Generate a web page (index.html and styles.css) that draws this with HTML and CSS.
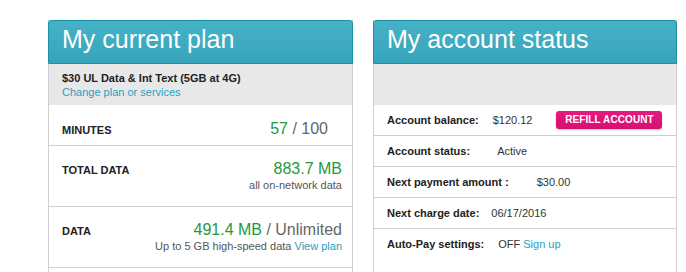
FILE: index.html
```html
<!DOCTYPE html>
<html>
<head>
<meta charset="utf-8">
<link rel="stylesheet" href="styles.css">
</head>
<body>
<div class="wrap">
  <section class="panel">
    <h2 class="panel-head">My current plan</h2>
    <div class="band">
      <div class="plan-name">$30 UL Data &amp; Int Text (5GB at 4G)</div>
      <a class="link" href="#">Change plan or services</a>
    </div>
    <div class="usage-row row-minutes">
      <div class="usage-label">MINUTES</div>
      <div class="usage-value minutes-val"><span class="green">57</span> / 100</div>
    </div>
    <div class="usage-row row-tall">
      <div class="usage-label">TOTAL DATA</div>
      <div class="usage-right">
        <div class="usage-value"><span class="green">883.7 MB</span></div>
        <div class="usage-note">all on-network data</div>
      </div>
    </div>
    <div class="usage-row row-tall">
      <div class="usage-label">DATA</div>
      <div class="usage-right">
        <div class="usage-value"><span class="green">491.4 MB</span> / Unlimited</div>
        <div class="usage-note">Up to 5 GB high-speed data <a class="link" href="#">View plan</a></div>
      </div>
    </div>
  </section>
  <section class="panel">
    <h2 class="panel-head">My account status</h2>
    <div class="band"></div>
    <div class="acct-row">
      <span class="acct-label">Account balance:</span>
      <span class="acct-val gap-balance">$120.12</span>
      <a class="btn" href="#">REFILL ACCOUNT</a>
    </div>
    <div class="acct-row">
      <span class="acct-label">Account status:</span>
      <span class="acct-val gap-status">Active</span>
    </div>
    <div class="acct-row">
      <span class="acct-label">Next payment amount :</span>
      <span class="acct-val gap-payment">$30.00</span>
    </div>
    <div class="acct-row">
      <span class="acct-label">Next charge date:</span>
      <span class="acct-val gap-charge">06/17/2016</span>
    </div>
    <div class="acct-row last">
      <span class="acct-label">Auto-Pay settings:</span>
      <span class="acct-val gap-autopay">OFF <a class="link" href="#">Sign up</a></span>
    </div>
  </section>
</div>
</body>
</html>
```
FILE: styles.css
```css
html, body {
  margin: 0;
  padding: 0;
  background: #fff;
  overflow: hidden;
}
body {
  font-family: "Liberation Sans", Arial, sans-serif;
  color: #333;
  height: 272px;
}
.wrap {
  display: flex;
  gap: 20px;
  padding: 20px 0 0 48px;
}
.panel {
  width: 303px;
  height: 252px;
  border-left: 1px solid #cfcfcf;
  border-right: 1px solid #cfcfcf;
  flex: none;
}
.panel + .panel {
  width: 302px;
}
.panel-head {
  margin: 0 -1px;
  height: 42px;
  border: 1px solid #1a93a8;
  border-radius: 3px 3px 0 0;
  background: linear-gradient(#46b2c7, #36a4ba);
  color: #fff;
  font-weight: normal;
  font-size: 25px;
  line-height: 37px;
  padding: 0 0 0 13px;
  box-sizing: content-box;
}
.band {
  background: #e8e8e8;
  height: 41px;
  padding: 0 13px;
  box-sizing: border-box;
  padding-top: 7px;
}
.plan-name {
  font-weight: bold;
  font-size: 11px;
  line-height: 14px;
  color: #222;
}
.link {
  color: #28a0c2;
  text-decoration: none;
  font-size: 11px;
}
.band .link {
  line-height: 14px;
  display: block;
}
.usage-row {
  display: flex;
  justify-content: space-between;
  align-items: flex-start;
  padding: 14px 10px 0 13px;
  border-bottom: 1px solid #cfcfcf;
  box-sizing: border-box;
}
.row-minutes {
  height: 41px;
}
.row-tall {
  height: 61px;
  padding-top: 13px;
}
.usage-label {
  font-weight: bold;
  font-size: 11px;
  line-height: 14px;
  color: #222;
  margin-top: 4px;
}
.usage-right {
  text-align: right;
}
.usage-value {
  font-size: 16px;
  line-height: 19px;
  color: #666;
}
.minutes-val {
  padding-right: 14px;
}
.green {
  color: #27983a;
}
.usage-note {
  font-size: 11px;
  line-height: 14px;
  color: #555;
}
.acct-row {
  display: flex;
  align-items: center;
  height: 30px;
  padding: 0 13px;
  border-bottom: 1px solid #cfcfcf;
  font-size: 11px;
}
.acct-row.last {
  border-bottom: none;
}
.acct-label {
  font-weight: bold;
  color: #222;
}
.acct-val {
  color: #333;
}
.gap-balance { margin-left: 14px; }
.gap-status { margin-left: 27px; }
.gap-payment { margin-left: 28px; }
.gap-charge { margin-left: 12px; }
.gap-autopay { margin-left: 14px; }
.btn {
  margin-left: 24px;
  display: inline-block;
  width: 106px;
  height: 18px;
  line-height: 18px;
  text-align: center;
  background: linear-gradient(#e5197f, #d80f74);
  border-radius: 3px;
  box-shadow: 0 1px 2px rgba(0,0,0,0.25);
  color: #fff;
  font-weight: bold;
  font-size: 10px;
  text-decoration: none;
  letter-spacing: 0.1px;
}
```
